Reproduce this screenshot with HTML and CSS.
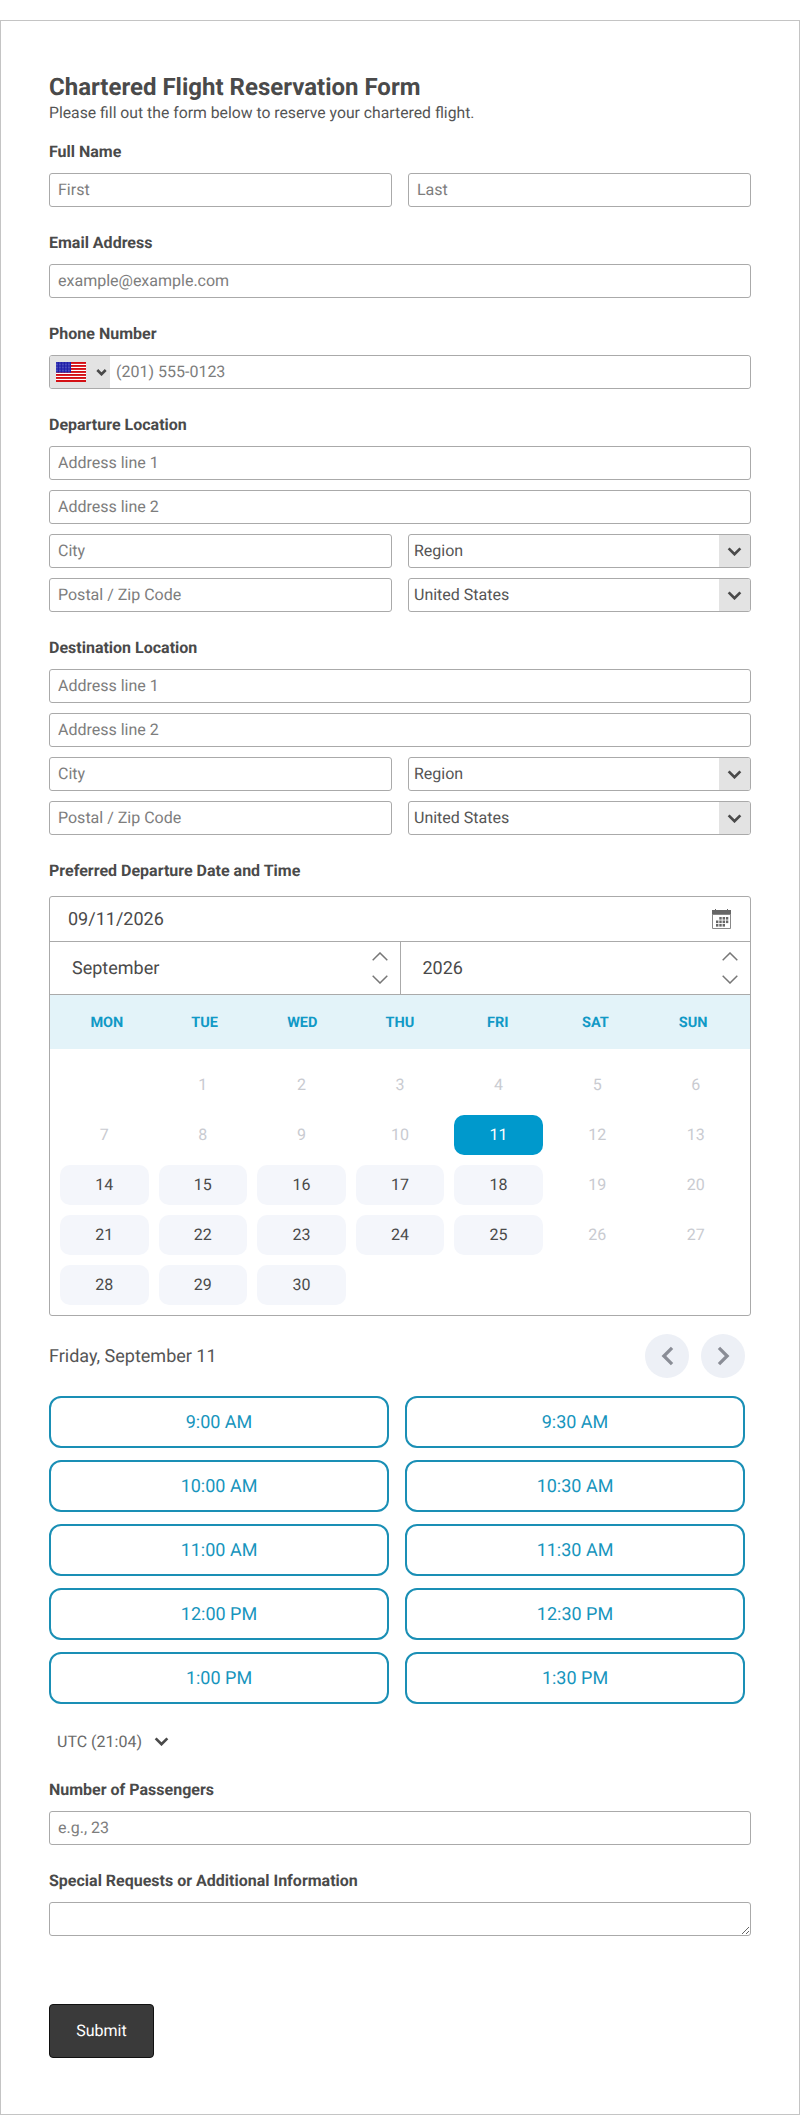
FILE: index.html
```html
<!DOCTYPE html>
<html lang="en">
<head>
    <meta charset="UTF-8">
    <meta name="viewport" content="width=device-width, initial-scale=1.0">
    <title>Chartered Flight Reservation Form</title>
    <link rel="stylesheet" href="styles.css">
</head>
<body>
    <form class="form-card">
        <h1>Chartered Flight Reservation Form</h1>
        <p class="form-intro">Please fill out the form below to reserve your chartered flight.</p>

        <section class="field">
            <label>Full Name</label>
            <div class="two-col">
                <input type="text" placeholder="First">
                <input type="text" placeholder="Last">
            </div>
        </section>

        <section class="field">
            <label>Email Address</label>
            <input type="text" placeholder="example@example.com">
        </section>

        <section class="field">
            <label>Phone Number</label>
            <div class="phone-box">
                <div class="flag-select">
                    <svg class="flag" viewBox="0 0 30 20" width="30" height="20">
                        <rect width="30" height="20" fill="#fff"/>
                        <g fill="#d40f14">
                            <rect width="30" height="1.9"/>
                            <rect y="3" width="30" height="1.9"/>
                            <rect y="6" width="30" height="1.9"/>
                            <rect y="9" width="30" height="1.9"/>
                            <rect y="12" width="30" height="1.9"/>
                            <rect y="15" width="30" height="1.9"/>
                            <rect y="18" width="30" height="2"/>
                        </g>
                        <rect width="15" height="10.6" fill="#1c1ca8"/>
                        <g stroke="#a9aee6" stroke-width="0.6" stroke-dasharray="0.6 0.9">
                            <path d="M0 1h15M0 2.5h15M0 4h15M0 5.5h15M0 7h15M0 8.5h15M0 10h15"/>
                        </g>
                    </svg>
                    <svg class="chev" viewBox="0 0 12 8" width="11" height="7"><path d="M1.2 1.2 6 6l4.8-4.8"/></svg>
                </div>
                <input type="text" placeholder="(201) 555-0123">
            </div>
        </section>

        <section class="field">
            <label>Departure Location</label>
            <div class="address">
                <input type="text" placeholder="Address line 1">
                <input type="text" placeholder="Address line 2">
                <div class="two-col">
                    <input type="text" placeholder="City">
                    <div class="select-box"><span>Region</span><i><svg class="chev" viewBox="0 0 16 10" width="15" height="9"><path d="M1.5 1.5 8 8l6.5-6.5"/></svg></i></div>
                </div>
                <div class="two-col">
                    <input type="text" placeholder="Postal / Zip Code">
                    <div class="select-box"><span>United States</span><i><svg class="chev" viewBox="0 0 16 10" width="15" height="9"><path d="M1.5 1.5 8 8l6.5-6.5"/></svg></i></div>
                </div>
            </div>
        </section>

        <section class="field">
            <label>Destination Location</label>
            <div class="address">
                <input type="text" placeholder="Address line 1">
                <input type="text" placeholder="Address line 2">
                <div class="two-col">
                    <input type="text" placeholder="City">
                    <div class="select-box"><span>Region</span><i><svg class="chev" viewBox="0 0 16 10" width="15" height="9"><path d="M1.5 1.5 8 8l6.5-6.5"/></svg></i></div>
                </div>
                <div class="two-col">
                    <input type="text" placeholder="Postal / Zip Code">
                    <div class="select-box"><span>United States</span><i><svg class="chev" viewBox="0 0 16 10" width="15" height="9"><path d="M1.5 1.5 8 8l6.5-6.5"/></svg></i></div>
                </div>
            </div>
        </section>

        <section class="field date-field">
            <label>Preferred Departure Date and Time</label>
            <div class="calendar">
                <div class="date-row">
                    <span>09/11/2026</span>
                    <svg viewBox="0 0 19 20" width="19" height="20">
                        <path d="M0 1h3V0h1v1h11V0h1v1h3v5H0z" fill="#666"/>
                        <path d="M.5 5.500h18v14H.5z" fill="#fff" stroke="#888"/>
                        <g fill="#666">
                            <rect x="7.300" y="8" width="2.400" height="2.600"/><rect x="10.600" y="8" width="2.400" height="2.600"/><rect x="13.900" y="8" width="2.400" height="2.600"/>
                            <rect x="4" y="11.500" width="2.400" height="2.600"/><rect x="7.300" y="11.500" width="2.400" height="2.600"/><rect x="10.600" y="11.500" width="2.400" height="2.600"/><rect x="13.900" y="11.500" width="2.400" height="2.600"/>
                            <rect x="4" y="15" width="2.400" height="2.600"/><rect x="7.300" y="15" width="2.400" height="2.600"/><rect x="10.600" y="15" width="2.400" height="2.600"/>
                        </g>
                    </svg>
                </div>
                <div class="month-row">
                    <div class="spin-box month">
                        <span>September</span>
                        <div class="spinner">
                            <svg viewBox="0 0 16 9" width="16" height="9"><path d="M.7 8.3 8 1l7.3 7.3"/></svg>
                            <svg viewBox="0 0 16 9" width="16" height="9"><path d="M.7.7 8 8 15.300 .7"/></svg>
                        </div>
                    </div>
                    <div class="spin-box year">
                        <span>2026</span>
                        <div class="spinner">
                            <svg viewBox="0 0 16 9" width="16" height="9"><path d="M.7 8.3 8 1l7.3 7.3"/></svg>
                            <svg viewBox="0 0 16 9" width="16" height="9"><path d="M.7.7 8 8 15.300 .7"/></svg>
                        </div>
                    </div>
                </div>
                <div class="week-head">
                    <span>MON</span><span>TUE</span><span>WED</span><span>THU</span><span>FRI</span><span>SAT</span><span>SUN</span>
                </div>
                <div class="days">
                    <span></span>
                    <span class="off">1</span><span class="off">2</span><span class="off">3</span><span class="off">4</span><span class="off">5</span><span class="off">6</span>
                    <span class="off">7</span><span class="off">8</span><span class="off">9</span><span class="off">10</span><span class="picked">11</span><span class="off">12</span><span class="off">13</span>
                    <span class="on">14</span><span class="on">15</span><span class="on">16</span><span class="on">17</span><span class="on">18</span><span class="off">19</span><span class="off">20</span>
                    <span class="on">21</span><span class="on">22</span><span class="on">23</span><span class="on">24</span><span class="on">25</span><span class="off">26</span><span class="off">27</span>
                    <span class="on">28</span><span class="on">29</span><span class="on">30</span>
                </div>
            </div>

            <div class="day-bar">
                <span>Friday, September 11</span>
                <div class="day-nav">
                    <button type="button"><svg viewBox="0 0 14 22" width="13" height="20"><path d="M12 2 3 11l9 9"/></svg></button>
                    <button type="button"><svg viewBox="0 0 14 22" width="13" height="20"><path d="M2 2l9 9-9 9"/></svg></button>
                </div>
            </div>

            <div class="slots">
                <button type="button">9:00 AM</button>
                <button type="button">9:30 AM</button>
                <button type="button">10:00 AM</button>
                <button type="button">10:30 AM</button>
                <button type="button">11:00 AM</button>
                <button type="button">11:30 AM</button>
                <button type="button">12:00 PM</button>
                <button type="button">12:30 PM</button>
                <button type="button">1:00 PM</button>
                <button type="button">1:30 PM</button>
            </div>

            <div class="timezone">
                <span>UTC (21:04)</span>
                <svg class="chev" viewBox="0 0 16 10" width="15" height="9"><path d="M1.5 1.5 8 8l6.5-6.5"/></svg>
            </div>
        </section>

        <section class="field passengers">
            <label>Number of Passengers</label>
            <input type="text" placeholder="e.g., 23">
        </section>

        <section class="field">
            <label>Special Requests or Additional Information</label>
            <textarea></textarea>
        </section>

        <button type="submit" class="submit-btn">Submit</button>
    </form>
</body>
</html>
```

FILE: styles.css
```css
* {
    margin: 0;
    padding: 0;
    box-sizing: border-box;
}

body {
    background: #fff;
    font-family: Roboto, "Liberation Sans", sans-serif;
    color: #4a4a4a;
    padding-top: 20px;
    height: 2115px;
    overflow: hidden;
    text-rendering: geometricPrecision;
}

input,
textarea,
button {
    text-rendering: geometricPrecision;
}

/* card */
.form-card {
    height: 2095px;
    border: 1px solid #c4c4c4;
    padding: 52px 48px 0;
}

h1 {
    font-size: 24px;
    line-height: 28px;
    font-weight: 700;
    color: #4a4a4a;
}

.form-intro {
    font-size: 15.75px;
    line-height: 20px;
    margin-top: 2px;
    color: #555;
}

.field {
    margin-top: 19px;
}

.field + .field {
    margin-top: 26px;
}

.field label {
    display: block;
    font-size: 16px;
    line-height: 20px;
    font-weight: 700;
    color: #4a4a4a;
    margin-bottom: 11px;
}

input,
textarea,
.select-box {
    display: block;
    width: 100%;
    height: 34px;
    border: 1px solid #aaa;
    border-radius: 3px;
    background: #fff;
    font-family: inherit;
    font-size: 16px;
    color: #4a4a4a;
    padding: 0 8px 2px;
    outline: none;
}

input::placeholder {
    color: #7d7d7d;
}

.two-col {
    display: grid;
    grid-template-columns: 1fr 1fr;
    gap: 16px;
}

/* phone */
.phone-box {
    display: flex;
    height: 34px;
    border: 1px solid #aaa;
    border-radius: 3px;
    overflow: hidden;
}

.phone-box input {
    border: 0;
    height: 32px;
    padding: 0 6px 2px;
}

.flag-select {
    flex: none;
    width: 60px;
    background: #e3e3e3;
    display: flex;
    align-items: center;
    padding-left: 6px;
    gap: 10px;
}

.chev {
    fill: none;
    stroke: #4a4a4a;
    stroke-width: 3;
}

/* address */
.address {
    display: flex;
    flex-direction: column;
    gap: 10px;
}

.select-box {
    display: flex;
    align-items: center;
    justify-content: space-between;
    padding: 0 0 0 5px;
    color: #555;
    overflow: hidden;
}

.select-box span {
    margin-top: -2px;
}

.select-box i {
    width: 31px;
    height: 100%;
    background: #e3e3e3;
    display: flex;
    align-items: center;
    justify-content: center;
}

/* calendar */
.date-field label {
    margin-bottom: 15px;
}

.calendar {
    border: 1px solid #aaa;
    border-radius: 3px;
    height: 420px;
}

.date-row {
    height: 45px;
    border-bottom: 1px solid #aaa;
    display: flex;
    align-items: center;
    justify-content: space-between;
    padding: 0 19px 0 18px;
    font-size: 18px;
}

.month-row {
    display: flex;
    height: 53px;
    border-bottom: 1px solid #aaa;
    font-size: 18px;
}

.spin-box {
    flex: 1;
    display: flex;
    align-items: center;
    justify-content: space-between;
    padding: 0 12px 0 22px;
}

.spin-box.month {
    border-right: 1px solid #aaa;
}

.spinner {
    display: flex;
    flex-direction: column;
    gap: 14px;
}

.spinner svg {
    display: block;
    fill: none;
    stroke: #777;
    stroke-width: 1.5;
}

.week-head {
    height: 54px;
    background: #e3f3f9;
    display: grid;
    grid-template-columns: repeat(7, 1fr);
    align-items: center;
    padding: 0 8px;
    font-size: 14.5px;
    font-weight: 700;
    color: #1199c6;
    text-align: center;
}

.days {
    display: grid;
    grid-template-columns: repeat(7, 1fr);
    grid-auto-rows: 40px;
    gap: 10px;
    padding: 16px 10px 0;
    font-size: 16px;
    text-align: center;
}

.days span {
    line-height: 40px;
    border-radius: 10px;
}

.days .off {
    color: #c9cbd1;
}

.days .on {
    background: #f4f6fb;
    color: #4a4a4a;
}

.days .picked {
    background: #0099cc;
    color: #fff;
}

/* time slots */
.day-bar {
    display: flex;
    align-items: center;
    justify-content: space-between;
    margin-top: 18px;
    padding-right: 6px;
    font-size: 18px;
    color: #555;
}

.day-nav {
    display: flex;
    gap: 12px;
}

.day-nav button {
    width: 44px;
    height: 44px;
    border: 0;
    border-radius: 50%;
    background: #edf0f6;
    display: flex;
    align-items: center;
    justify-content: center;
}

.day-nav svg {
    fill: none;
    stroke: #8a8d96;
    stroke-width: 3.6;
}

.slots {
    display: grid;
    grid-template-columns: 340px 340px;
    gap: 12px 16px;
    margin-top: 18px;
}

.slots button {
    height: 52px;
    border: 2px solid #1a8fb5;
    border-radius: 12px;
    background: #fff;
    font-family: inherit;
    font-size: 18px;
    color: #1795bd;
}

.timezone {
    display: flex;
    align-items: center;
    gap: 12px;
    margin-top: 28px;
    padding-left: 8px;
    font-size: 16px;
    color: #6a6a6a;
}

.field.passengers {
    margin-top: 29px;
}

textarea {
    resize: vertical;
}

.submit-btn {
    display: block;
    width: 105px;
    height: 54px;
    margin-top: 68px;
    padding-bottom: 2px;
    background: #3a3a3a;
    border: 1px solid #111;
    border-radius: 4px;
    color: #fff;
    font-family: inherit;
    font-size: 16px;
}
```
